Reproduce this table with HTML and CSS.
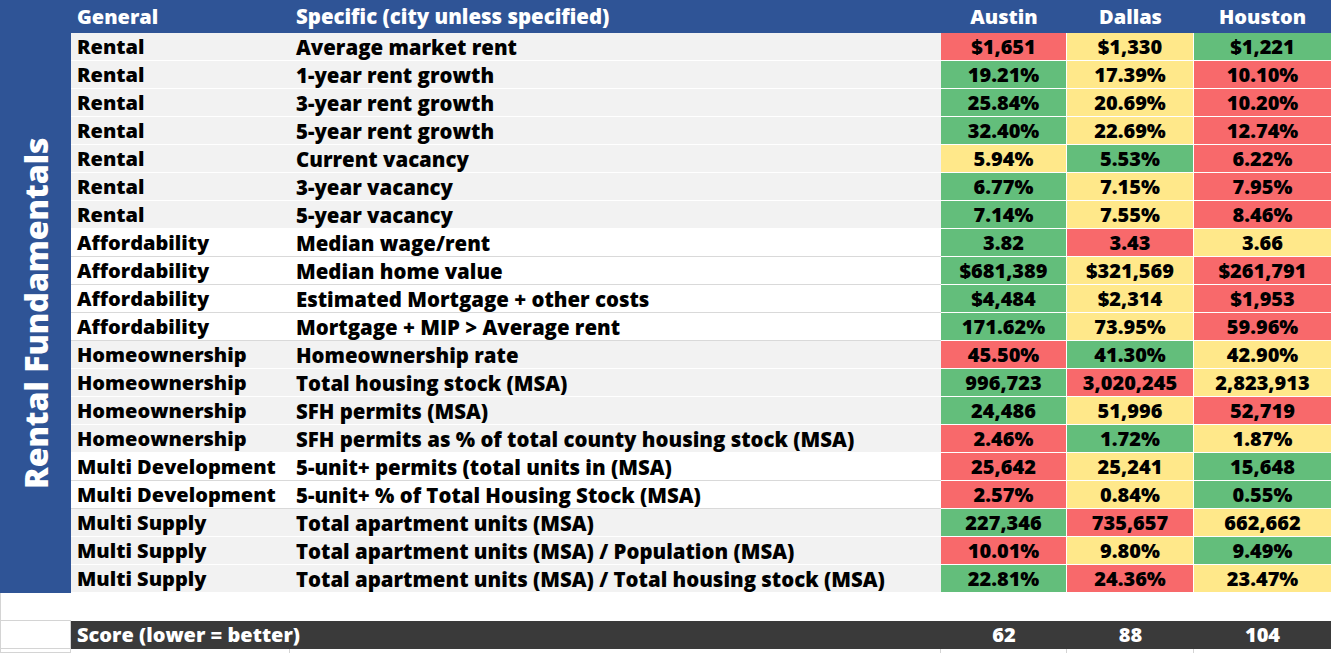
FILE: index.html
```html
<!DOCTYPE html>
<html>
<head>
<meta charset="utf-8">
<link rel="stylesheet" href="styles.css">
</head>
<body>
<div class="sheet">
  <div class="main">
    <div class="side"><span class="side-label">Rental Fundamentals</span></div>
    <div class="table">
      <div class="row head">
        <div class="c gen">General</div><div class="c spec">Specific (city unless specified)</div>
        <div class="c num">Austin</div><div class="c num">Dallas</div><div class="c num">Houston</div>
      </div>
      <div class="row grey"><div class="c gen">Rental</div><div class="c spec">Average market rent</div><div class="c num r">$1,651</div><div class="c num y">$1,330</div><div class="c num g">$1,221</div></div>
      <div class="row grey"><div class="c gen">Rental</div><div class="c spec">1-year rent growth</div><div class="c num g">19.21%</div><div class="c num y">17.39%</div><div class="c num r">10.10%</div></div>
      <div class="row grey"><div class="c gen">Rental</div><div class="c spec">3-year rent growth</div><div class="c num g">25.84%</div><div class="c num y">20.69%</div><div class="c num r">10.20%</div></div>
      <div class="row grey"><div class="c gen">Rental</div><div class="c spec">5-year rent growth</div><div class="c num g">32.40%</div><div class="c num y">22.69%</div><div class="c num r">12.74%</div></div>
      <div class="row grey"><div class="c gen">Rental</div><div class="c spec">Current vacancy</div><div class="c num y">5.94%</div><div class="c num g">5.53%</div><div class="c num r">6.22%</div></div>
      <div class="row grey"><div class="c gen">Rental</div><div class="c spec">3-year vacancy</div><div class="c num g">6.77%</div><div class="c num y">7.15%</div><div class="c num r">7.95%</div></div>
      <div class="row grey"><div class="c gen">Rental</div><div class="c spec">5-year vacancy</div><div class="c num g">7.14%</div><div class="c num y">7.55%</div><div class="c num r">8.46%</div></div>
      <div class="row white"><div class="c gen">Affordability</div><div class="c spec">Median wage/rent</div><div class="c num g">3.82</div><div class="c num r">3.43</div><div class="c num y">3.66</div></div>
      <div class="row white"><div class="c gen">Affordability</div><div class="c spec">Median home value</div><div class="c num g">$681,389</div><div class="c num y">$321,569</div><div class="c num r">$261,791</div></div>
      <div class="row white"><div class="c gen">Affordability</div><div class="c spec">Estimated Mortgage + other costs</div><div class="c num g">$4,484</div><div class="c num y">$2,314</div><div class="c num r">$1,953</div></div>
      <div class="row white"><div class="c gen">Affordability</div><div class="c spec">Mortgage + MIP &gt; Average rent</div><div class="c num g">171.62%</div><div class="c num y">73.95%</div><div class="c num r">59.96%</div></div>
      <div class="row grey"><div class="c gen">Homeownership</div><div class="c spec">Homeownership rate</div><div class="c num r">45.50%</div><div class="c num g">41.30%</div><div class="c num y">42.90%</div></div>
      <div class="row grey"><div class="c gen">Homeownership</div><div class="c spec">Total housing stock (MSA)</div><div class="c num g">996,723</div><div class="c num r">3,020,245</div><div class="c num y">2,823,913</div></div>
      <div class="row grey"><div class="c gen">Homeownership</div><div class="c spec">SFH permits (MSA)</div><div class="c num g">24,486</div><div class="c num y">51,996</div><div class="c num r">52,719</div></div>
      <div class="row grey"><div class="c gen">Homeownership</div><div class="c spec">SFH permits as % of total county housing stock (MSA)</div><div class="c num r">2.46%</div><div class="c num g">1.72%</div><div class="c num y">1.87%</div></div>
      <div class="row white"><div class="c gen">Multi Development</div><div class="c spec">5-unit+ permits (total units in (MSA)</div><div class="c num r">25,642</div><div class="c num y">25,241</div><div class="c num g">15,648</div></div>
      <div class="row white"><div class="c gen">Multi Development</div><div class="c spec">5-unit+ % of Total Housing Stock (MSA)</div><div class="c num r">2.57%</div><div class="c num y">0.84%</div><div class="c num g">0.55%</div></div>
      <div class="row grey"><div class="c gen">Multi Supply</div><div class="c spec">Total apartment units (MSA)</div><div class="c num g">227,346</div><div class="c num r">735,657</div><div class="c num y">662,662</div></div>
      <div class="row grey"><div class="c gen">Multi Supply</div><div class="c spec">Total apartment units (MSA) / Population (MSA)</div><div class="c num r">10.01%</div><div class="c num y">9.80%</div><div class="c num g">9.49%</div></div>
      <div class="row grey"><div class="c gen">Multi Supply</div><div class="c spec">Total apartment units (MSA) / Total housing stock (MSA)</div><div class="c num g">22.81%</div><div class="c num r">24.36%</div><div class="c num y">23.47%</div></div>
    </div>
  </div>
  <div class="blank">
    <div class="a"></div><div class="rest"></div>
  </div>
  <div class="score-line">
    <div class="a"></div>
    <div class="row score">
      <div class="c gen">Score (lower = better)</div><div class="c spec"></div>
      <div class="c num">62</div><div class="c num">88</div><div class="c num">104</div>
    </div>
  </div>
  <div class="tail">
    <div class="a"></div>
    <div class="row tail-row"><div class="c"></div><div class="c"></div><div class="c"></div><div class="c"></div><div class="c last"></div></div>
  </div>
</div>
</body>
</html>
```

FILE: styles.css
```css
html, body {
  margin: 0;
  padding: 0;
  background: #ffffff;
}
body {
  font-family: "Open Sans", "Liberation Sans", sans-serif;
  font-weight: 800;
  font-size: 20px;
  color: #000000;
  width: 1331px;
  height: 653px;
  overflow: hidden;
}
.sheet {
  display: flex;
  flex-direction: column;
}
.main {
  display: flex;
  background: #2F5496;
}
.side {
  width: 71px;
  flex: none;
  display: flex;
  align-items: flex-end;
  justify-content: center;
}
.side-label {
  writing-mode: vertical-rl;
  transform: rotate(180deg);
  color: #ffffff;
  font-size: 32px;
  font-weight: 800;
  height: 560px;
  text-align: center;
  line-height: 71px;
}
.table {
  flex: 1;
  display: flex;
  flex-direction: column;
}
.row {
  display: grid;
  grid-template-columns: 219px 651px 126px 127px 1fr;
  height: 28px;
  box-sizing: border-box;
}
.c {
  display: flex;
  align-items: center;
  padding-left: 6px;
  white-space: nowrap;
  box-sizing: border-box;
  line-height: 1;
}
.spec {
  font-size: 20.4px;
}
.num {
  justify-content: center;
  padding-left: 0;
}
.head {
  height: 33px;
  color: #ffffff;
  background: #2F5496;
}
.head .c {
  padding-bottom: 0;
}
.grey {
  background: #F2F2F2;
  border-bottom: 1px solid #ffffff;
}
.white {
  background: #ffffff;
  border-bottom: 1px solid #D9D9D9;
}
.grey .c, .white .c {
  padding-top: 1px;
}
.r, .y, .g {
  border-right: 1px solid #ffffff;
  margin-bottom: -1px;
  border-bottom: 1px solid #ffffff;
}
.r { background: #F8696B; }
.y { background: #FFE88A; }
.g { background: #63BE7B; }
.row > .c:last-child.r,
.row > .c:last-child.y,
.row > .c:last-child.g {
  border-right: none;
}
.blank {
  display: flex;
  height: 28px;
}
.blank .a {
  width: 71px;
  box-sizing: border-box;
  border-left: 1px solid #D4D4D4;
  border-bottom: 1px solid #D4D4D4;
}
.blank .rest {
  flex: 1;
}
.score-line {
  display: flex;
  height: 28px;
}
.score-line .a, .tail .a {
  width: 71px;
  flex: none;
  box-sizing: border-box;
  border-left: 1px solid #D4D4D4;
  border-right: 1px solid #D4D4D4;
  border-bottom: 1px solid #D4D4D4;
}
.score {
  flex: 1;
  background: #3A3A3A;
  color: #ffffff;
}
.tail {
  display: flex;
  height: 4px;
}
.tail-row {
  flex: 1;
  height: 4px;
}
.tail-row .c {
  border-right: 1px solid #D4D4D4;
  padding: 0;
}
.tail-row .c.last {
  border-right: none;
}
```
